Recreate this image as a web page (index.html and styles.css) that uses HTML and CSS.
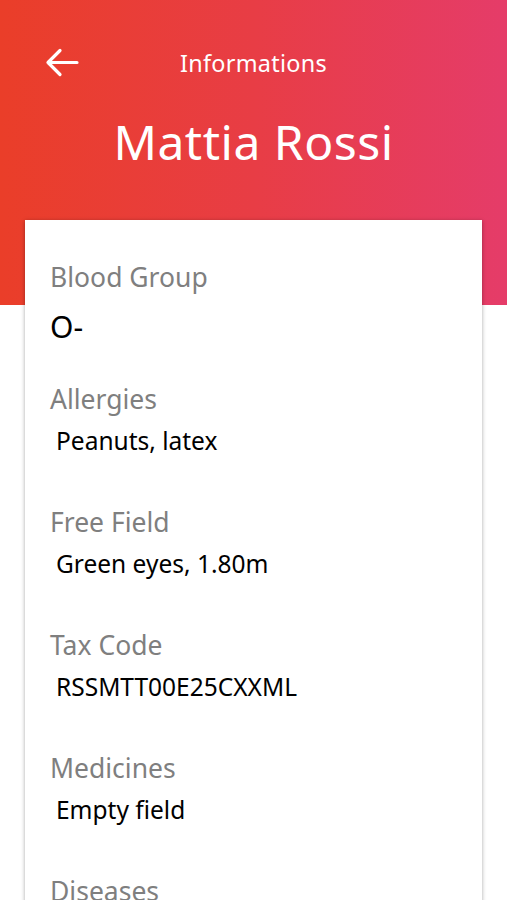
FILE: index.html
```html
<!DOCTYPE html>
<html>
<head>
<meta charset="utf-8">
<link rel="stylesheet" href="styles.css">
</head>
<body>
<header class="hero">
  <div class="topbar">
    <svg class="back" width="34" height="30" viewBox="0 0 34 30">
      <path d="M3 14.5 H32 M3 14.5 L15 2.5 M3 14.5 L15 26.5" fill="none" stroke="#fff" stroke-width="3.2" stroke-linecap="round" stroke-linejoin="round"/>
    </svg>
    <div class="title">Informations</div>
  </div>
  <h1 class="name">Mattia Rossi</h1>
</header>
<main class="card">
  <div class="field first">
    <div class="label">Blood Group</div>
    <div class="value big">O-</div>
  </div>
  <div class="field">
    <div class="label">Allergies</div>
    <div class="value">Peanuts, latex</div>
  </div>
  <div class="field">
    <div class="label">Free Field</div>
    <div class="value">Green eyes, 1.80m</div>
  </div>
  <div class="field">
    <div class="label">Tax Code</div>
    <div class="value">RSSMTT00E25CXXML</div>
  </div>
  <div class="field">
    <div class="label">Medicines</div>
    <div class="value">Empty field</div>
  </div>
  <div class="field">
    <div class="label">Diseases</div>
    <div class="value">Empty field</div>
  </div>
</main>
</body>
</html>
```
FILE: styles.css
```css
html, body {
  margin: 0;
  padding: 0;
  background: #fff;
  overflow: hidden;
}
body {
  font-family: "Noto Sans", "DejaVu Sans", sans-serif;
  width: 507px;
}
.hero {
  height: 305px;
  background: linear-gradient(90deg, #ea3e29 0%, #e83d45 50%, #e53c69 100%);
  color: #fff;
  box-sizing: border-box;
  padding-top: 48px;
}
.topbar {
  position: relative;
  height: 30px;
  display: flex;
  align-items: center;
  justify-content: center;
}
.back {
  position: absolute;
  left: 45px;
  top: 0;
}
.title {
  font-size: 23.4px;
  line-height: 30px;
  letter-spacing: 0.3px;
}
.name {
  margin: 34px 0 0;
  font-weight: 400;
  font-size: 48px;
  line-height: 60px;
  text-align: center;
  letter-spacing: 0.5px;
}
.card {
  margin: -85px 25px 0;
  background: #fff;
  box-shadow: 0 1px 4px rgba(0,0,0,0.35);
  padding: 42px 25px 40px;
  min-height: 700px;
}
.field {
  margin-bottom: 51px;
}
.field.first {
  margin-bottom: 40px;
}
.label {
  color: #7f7f7f;
  font-size: 26.5px;
  line-height: 30px;
}
.value {
  color: #000;
  font-size: 24.5px;
  line-height: 30px;
  margin-top: 12px;
  padding-left: 6px;
}
.value.big {
  font-size: 30px;
  line-height: 34px;
  margin-top: 18px;
  padding-left: 0;
}
```
